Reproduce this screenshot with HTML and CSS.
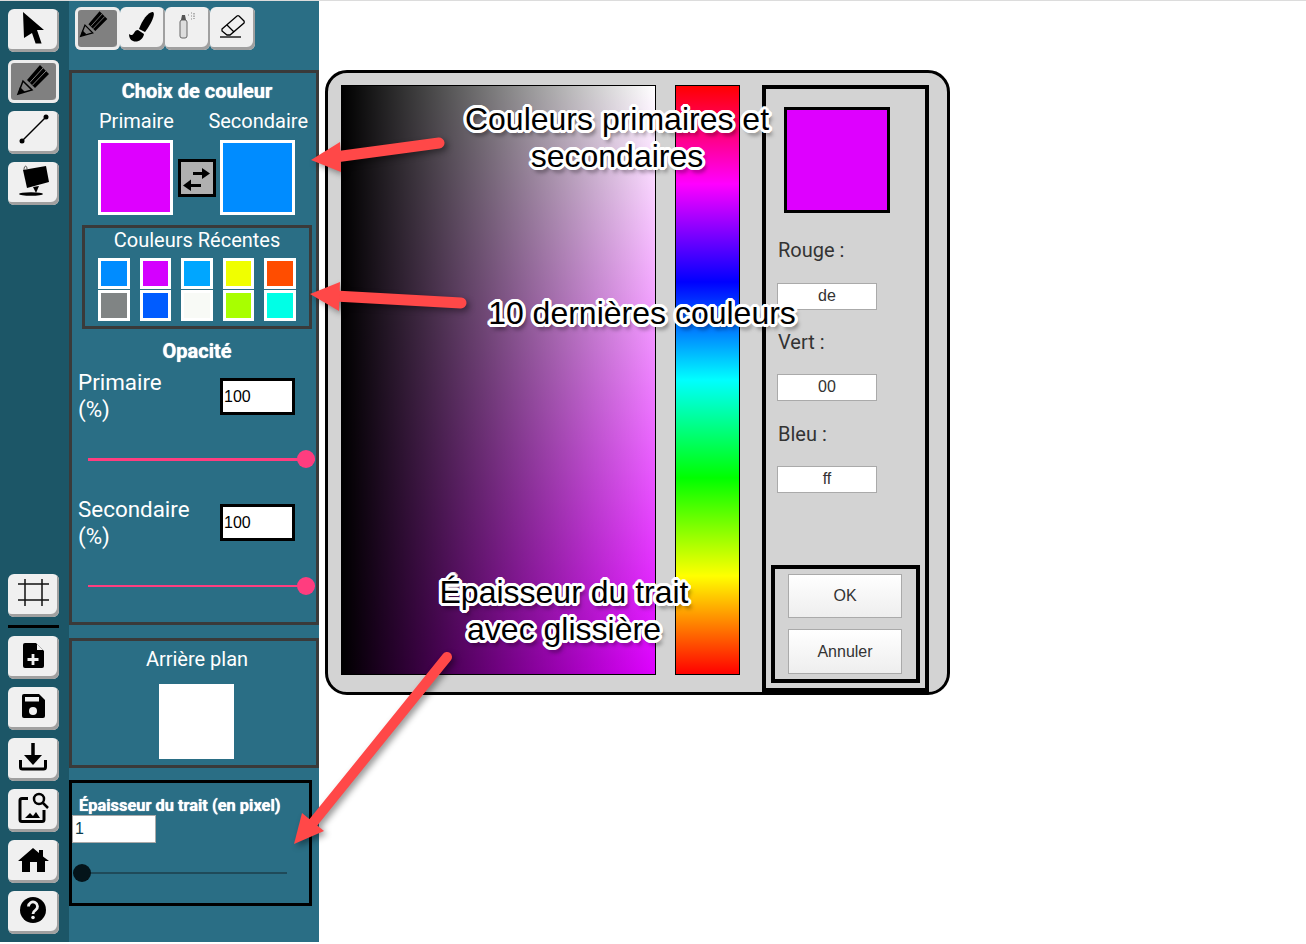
FILE: index.html
```html
<!DOCTYPE html>
<html lang="fr">
<head>
    <meta charset="UTF-8">
    <title>Choix de couleur</title>
    <link rel="stylesheet" href="styles.css">
</head>
<body>
    <svg class="defs" width="0" height="0">
        <symbol id="pencil" viewBox="0 0 51 43">
            <path d="M10 34 L15 21 L24 30 Z" fill="none" stroke="#000" stroke-width="1.500"/>
            <path d="M10 34 L12 27 L17 32 Z"/>
            <path d="M19 20 L32 5 L41 14 L27 28 Z"/>
            <path d="M21.700 22.700 L35 8 M24.300 25.300 L38 11" stroke="#808080" stroke-width="1"/>
        </symbol>
    </svg>

    <div class="app">
        <nav class="toolbar">
            <div class="toolgroup">
                <button class="tool">
                    <svg viewBox="0 0 51 43"><path d="M15 3 L36 21 L29 21 L33.600 34.600 L27.600 34.600 L24 24 L16 29 Z"/></svg>
                </button>
                <button class="tool active">
                    <svg viewBox="0 0 51 43"><use href="#pencil"/></svg>
                </button>
                <button class="tool">
                    <svg viewBox="0 0 51 43"><circle cx="14" cy="30" r="2.500"/><circle cx="38" cy="6" r="2.500"/><path d="M14 30 L38 6" stroke="#000" stroke-width="1.500"/></svg>
                </button>
                <button class="tool">
                    <svg viewBox="0 0 51 43">
                        <path d="M15 8 L38 4 L41 20 L19 26 Z"/>
                        <path d="M16 8 C16 3 19 3 19 7" fill="none" stroke="#555"/>
                        <path d="M25 25 L28 31 L31 24 Z"/>
                        <ellipse cx="23" cy="32" rx="12" ry="1.800"/>
                    </svg>
                </button>
            </div>
            <div class="toolgroup bottom">
                <button class="tool">
                    <svg viewBox="0 0 51 43"><path d="M17 5 V32 M34 5 V32 M10 10 H41 M10 26 H41" stroke="#111" stroke-width="1.500"/></svg>
                </button>
                <div class="separator"></div>
                <button class="tool">
                    <svg viewBox="0 0 51 43">
                        <path d="M17 7 H28 L36 15 V30 A2 2 0 0 1 34 32 H17 A2 2 0 0 1 15 30 V9 A2 2 0 0 1 17 7 Z"/>
                        <path d="M29 8 L35 14 H29 Z" fill="#f0f0f0"/>
                        <path d="M25 18 V29 M19.500 23.500 H30.500" stroke="#f0f0f0" stroke-width="2.800"/>
                    </svg>
                </button>
                <button class="tool">
                    <svg viewBox="0 0 51 43">
                        <path d="M16 7 H31 L37 13 V29 A2 2 0 0 1 35 31 H16 A2 2 0 0 1 14 29 V9 A2 2 0 0 1 16 7 Z"/>
                        <rect x="17" y="10" width="14" height="4.500" fill="#f0f0f0"/>
                        <circle cx="25" cy="24" r="4" fill="#f0f0f0"/>
                    </svg>
                </button>
                <button class="tool">
                    <svg viewBox="0 0 51 43">
                        <path d="M25 5 V20" stroke="#000" stroke-width="3.500"/>
                        <path d="M16 17 H34 L25 27 Z"/>
                        <path d="M12.500 22 V29 A2 2 0 0 0 14.500 31 H35.500 A2 2 0 0 0 37.500 29 V22" fill="none" stroke="#000" stroke-width="3"/>
                    </svg>
                </button>
                <button class="tool">
                    <svg viewBox="0 0 51 43">
                        <path d="M20 9.500 H14 A2 2 0 0 0 12 11.500 V30.500 A2 2 0 0 0 14 32.500 H34 A2 2 0 0 0 36 30.500 V21" fill="none" stroke="#000" stroke-width="3"/>
                        <path d="M17 29 L22 24 L25 27 L28 23 L32 29 Z"/>
                        <circle cx="31" cy="10" r="5" fill="none" stroke="#000" stroke-width="2.500"/>
                        <path d="M35 14 L40 19" stroke="#000" stroke-width="2.500"/>
                    </svg>
                </button>
                <button class="tool">
                    <svg viewBox="0 0 51 43"><path d="M25 8 L31 13 V10 H35 V16.500 L41 21 H37 V32 H29 V22 H22 V32 H14 V21 H10 Z"/></svg>
                </button>
                <button class="tool">
                    <svg viewBox="0 0 51 43">
                        <circle cx="25" cy="19" r="13"/>
                        <path d="M20.500 15.500 A4.500 4.500 0 1 1 27.500 19.200 C26 20.200 25 21 25 23" fill="none" stroke="#f0f0f0" stroke-width="2.800"/>
                        <circle cx="25" cy="26.500" r="1.800" fill="#f0f0f0"/>
                    </svg>
                </button>
            </div>
        </nav>

        <aside class="panel">
            <div class="subtools">
                <button class="tool small active">
                    <svg viewBox="0 0 45 43"><use href="#pencil" x="-3" y="0" width="44" height="37"/></svg>
                </button>
                <button class="tool small">
                    <svg viewBox="0 0 45 43">
                        <path d="M33 5 C36 7 31 17 25 25 L19 22 C22 13 29 4 33 5 Z"/>
                        <path d="M18 23 L24 27 C23 33 17 36 13 34 C10 33 9 30 9 27 C11 29 13 28 14 26 C15 24 16 23 18 23 Z"/>
                    </svg>
                </button>
                <button class="tool small">
                    <svg viewBox="0 0 45 43">
                        <rect x="15" y="13" width="7" height="18" rx="2" fill="#ddd" stroke="#666"/>
                        <path d="M16 13 L17 8 H20 L21 13 Z" fill="#555"/>
                        <path d="M23 8 H24 M26 6 H27 M26 9 H27 M26 12 H27 M29 6 V12" stroke="#888" stroke-width="1.200" stroke-dasharray="1.500 1"/>
                    </svg>
                </button>
                <button class="tool small">
                    <svg viewBox="0 0 45 43">
                        <path d="M12 22 L27 9 A2 2 0 0 1 29 9 L34 14 A2 2 0 0 1 34 16 L20 28 L17 28 L12 24 Z" fill="none" stroke="#000" stroke-width="1.300"/>
                        <path d="M17 18 L24 25" stroke="#000" stroke-width="1.300"/>
                        <path d="M10 30 H31" stroke="#000" stroke-width="1.300"/>
                    </svg>
                </button>
            </div>

            <section class="box colors">
                <h2 class="title">Choix de couleur</h2>
                <div class="pick-labels">
                    <span>Primaire</span>
                    <span>Secondaire</span>
                </div>
                <div class="pick-row">
                    <div class="swatch big primary"></div>
                    <button class="swap">
                        <svg viewBox="0 0 32 32">
                            <path d="M12 11.500 H22" stroke="#000" stroke-width="3"/>
                            <path d="M21 6 L29 11.500 L21 17 Z"/>
                            <path d="M20 23.500 H9" stroke="#000" stroke-width="3"/>
                            <path d="M10 17.500 L2 23.500 L10 29 Z"/>
                        </svg>
                    </button>
                    <div class="swatch big secondary"></div>
                </div>

                <div class="recent">
                    <div class="recent-title">Couleurs Récentes</div>
                    <div class="recent-grid">
                        <div class="swatch" style="background:#008cff"></div>
                        <div class="swatch" style="background:#d400ff"></div>
                        <div class="swatch" style="background:#00a6ff"></div>
                        <div class="swatch" style="background:#f0ff00"></div>
                        <div class="swatch" style="background:#ff4d00"></div>
                        <div class="swatch" style="background:#808484"></div>
                        <div class="swatch" style="background:#005cff"></div>
                        <div class="swatch" style="background:#f8faf6"></div>
                        <div class="swatch" style="background:#a8ff00"></div>
                        <div class="swatch" style="background:#00ffe6"></div>
                    </div>
                </div>

                <h2 class="title opacity-title">Opacité</h2>
                <div class="opacity-row">
                    <label class="opacity-label">Primaire (%)</label>
                    <input class="opacity-input" type="text" value="100">
                </div>
                <input class="range pink thick" type="range" min="0" max="100" value="100">
                <div class="opacity-row">
                    <label class="opacity-label">Secondaire (%)</label>
                    <input class="opacity-input" type="text" value="100">
                </div>
                <input class="range pink" type="range" min="0" max="100" value="100">
            </section>

            <section class="box background">
                <div class="bg-title">Arrière plan</div>
                <div class="bg-swatch"></div>
            </section>

            <section class="stroke">
                <div class="stroke-title">Épaisseur du trait (en pixel)</div>
                <input class="stroke-input" type="text" value="1">
                <input class="range dark" type="range" min="1" max="100" value="1">
            </section>
        </aside>

        <main class="workspace">
            <div class="dialog">
                <div class="sv-picker"></div>
                <div class="hue-bar"></div>
                <div class="dialog-side">
                    <div class="preview"></div>
                    <div class="field">
                        <label>Rouge :</label>
                        <input type="text" value="de">
                    </div>
                    <div class="field">
                        <label>Vert :</label>
                        <input type="text" value="00">
                    </div>
                    <div class="field">
                        <label>Bleu :</label>
                        <input type="text" value="ff">
                    </div>
                    <div class="dialog-buttons">
                        <button class="dlg-btn">OK</button>
                        <button class="dlg-btn">Annuler</button>
                    </div>
                </div>
            </div>
        </main>
    </div>

    <!-- annotations par dessus la capture -->
    <svg class="arrows" viewBox="0 0 1306 944">
        <g fill="#ff4848" stroke="#ff4848" stroke-linecap="round">
            <path d="M439 143 L335 157" stroke-width="11" fill="none"/>
            <path d="M311 160 L340 142 L341 172 Z" stroke="none"/>
            <path d="M461 303 L335 296" stroke-width="11" fill="none"/>
            <path d="M310 294 L340 282 L339 311 Z" stroke="none"/>
            <path d="M447 657 L312 824" stroke-width="10" fill="none"/>
            <path d="M294 844 L302 813 L324 831 Z" stroke="none"/>
        </g>
    </svg>
    <div class="note note-1">Couleurs primaires et<br>secondaires</div>
    <div class="note note-2">10 dernières couleurs</div>
    <div class="note note-3">Épaisseur du trait<br>avec glissière</div>
</body>
</html>
```

FILE: styles.css
```css
*{
    box-sizing: border-box;
}
body{
    margin: 0px;
    height: 944px;
    background-color: white;
    font-family: Roboto, Arial, sans-serif;
    border-top: 1px solid #dcdcdc;
    overflow: hidden;
    position: relative;
}
.defs{
    position: absolute;
}
.app{
    display: flex;
    height: 941px;
}
button{
    padding: 0;
    font-family: inherit;
}
svg{
    display: block;
}

/* barre de gauche */
.toolbar{
    width: 69px;
    background-color: #1c5667;
    padding: 8px 10px 8px 8px;
    display: flex;
    flex-direction: column;
    justify-content: space-between;
}
.toolgroup{
    display: flex;
    flex-direction: column;
    gap: 8px;
}
.tool{
    width: 51px;
    height: 43px;
    border: 0;
    border-radius: 6px;
    background-color: #f0f0f0;
    box-shadow: inset -2px -3px 0 #a0a0a0;
}
.tool svg{
    width: 100%;
    height: 100%;
}
.tool.active{
    background-color: #808080;
    box-shadow: inset 0 0 0 3px #ededed, inset -2px -3px 0 #a8a8a8;
}
.tool.small{
    width: 45px;
}
.separator{
    height: 3px;
    background-color: black;
}

/* panneau */
.panel{
    width: 250px;
    background-color: #2a6e85;
    color: white;
}
.subtools{
    display: flex;
    height: 69px;
    padding: 6px 0 0 6px;
}
.box{
    border: 3px solid #3a3a3a;
}
.title{
    margin: 0;
    padding-left: 6px;
    font-size: 20px;
    font-weight: 700;
    text-align: center;
    text-shadow: 0 0 1px white;
    line-height: 24px;
}
.colors{
    height: 555px;
    padding-top: 6px;
}
.pick-labels{
    display: flex;
    justify-content: space-between;
    font-size: 20px;
    line-height: 24px;
    margin-top: 6px;
    padding: 0 8px 0 27px;
}
.pick-row{
    display: flex;
    align-items: center;
    gap: 5px;
    padding-left: 26px;
    margin-top: 7px;
}
.swatch{
    border: 3px solid white;
}
.swatch.big{
    width: 75px;
    height: 75px;
}
.primary{
    background-color: #de00ff;
}
.secondary{
    background-color: #008cff;
}
.swap{
    width: 38px;
    height: 38px;
    border: 3px solid black;
    background-color: #b0b0b0;
    margin-right: -1px;
}
.recent{
    width: 230px;
    height: 104px;
    margin: 10px 0 0 10px;
    border: 3px solid #3a3a3a;
}
.recent-title{
    font-size: 20px;
    line-height: 24px;
    text-align: center;
}
.recent-grid{
    display: grid;
    grid-template-columns: repeat(5, 31.600px);
    grid-auto-rows: 30.500px;
    column-gap: 10px;
    row-gap: 1.500px;
    padding-left: 13px;
    margin-top: 6px;
}
.opacity-title{
    margin-top: 10px;
}
.opacity-row{
    display: flex;
    justify-content: space-between;
    height: 54px;
    margin-top: 6px;
    padding: 0 21px 0 6px;
}
.range + .opacity-row{
    margin-top: 28px;
}
.opacity-label{
    width: 118px;
    font-size: 22.400px;
    line-height: 27px;
}
.opacity-input{
    width: 75px;
    height: 37px;
    margin-top: 9px;
    border: 3px solid black;
    padding: 0 0 0 1px;
    background-color: white;
    font-family: "Liberation Sans", Arial, sans-serif;
    font-size: 16px;
    color: black;
    outline: 0;
}
.range + .opacity-row .opacity-input{
    margin-top: 8px;
}

/* glissieres */
.range{
    display: block;
    -webkit-appearance: none;
    appearance: none;
    background: transparent;
    margin: 0;
    height: 18px;
}
.range::-webkit-slider-runnable-track{
    height: 2px;
}
.range::-webkit-slider-thumb{
    -webkit-appearance: none;
    width: 18px;
    height: 18px;
    border-radius: 50%;
    margin-top: -8px;
}
.range.pink{
    width: 227px;
    margin: 27px 0 0 16px;
}
.range.pink::-webkit-slider-runnable-track{
    background-color: #ff3d7f;
}
.range.pink::-webkit-slider-thumb{
    background-color: #ff3d7f;
}
.range.thick::-webkit-slider-runnable-track{
    height: 3px;
}
.range.thick::-webkit-slider-thumb{
    margin-top: -7.500px;
}
.range.dark{
    width: 214px;
    margin: 21px 0 0 1px;
}
.range.dark::-webkit-slider-runnable-track{
    background-color: #1f4a59;
}
.range.dark::-webkit-slider-thumb{
    background-color: #04141a;
}

.background{
    height: 130px;
    margin-top: 13px;
    padding-top: 6px;
}
.bg-title{
    padding-left: 6px;
    font-size: 20px;
    line-height: 24px;
    text-align: center;
}
.bg-swatch{
    width: 75px;
    height: 75px;
    margin: 13px 0 0 87px;
    background-color: white;
}
.stroke{
    width: 243px;
    height: 126px;
    margin-top: 12px;
    border: 3px solid black;
    padding-top: 13px;
}
.stroke-title{
    font-size: 16.400px;
    font-weight: 700;
    line-height: 19px;
    padding-left: 7px;
    white-space: nowrap;
    text-shadow: 0 0 1px white;
}
.stroke-input{
    display: block;
    width: 84px;
    height: 28px;
    border: 1px solid #aaa;
    padding: 0 2px;
    background-color: white;
    font-family: "Liberation Sans", Arial, sans-serif;
    font-size: 16px;
    color: #0a3a4a;
    outline: 0;
}

/* selecteur de couleur */
.workspace{
    flex: 1;
    padding: 69px 0 0 6px;
}
.dialog{
    width: 625px;
    height: 625px;
    display: flex;
    padding: 12px 18px 0 13px;
    border: 3px solid black;
    border-radius: 22px;
    background-color: #d3d3d3;
}
.sv-picker{
    width: 315px;
    height: 590px;
    border: 1px solid black;
    background: linear-gradient(to right, #000, rgba(0, 0, 0, 0)), linear-gradient(to bottom, #fff, #de00ff);
}
.hue-bar{
    width: 65px;
    height: 590px;
    margin-left: 19px;
    border: 1px solid black;
    background: linear-gradient(to bottom, #f00 0%, #f0f 16.660%, #00f 33.330%, #0ff 50%, #0f0 66.660%, #ff0 83.330%, #f00 100%);
}
.dialog-side{
    width: 167px;
    margin-left: 22px;
    border: 4px solid black;
    display: flex;
    flex-direction: column;
    color: #333;
}
.preview{
    width: 106px;
    height: 106px;
    margin: 18px 0 0 18px;
    border: 3px solid black;
    background-color: #de00ff;
}
.field{
    margin: 20px 0 0 11px;
}
.preview + .field{
    margin-top: 25px;
}
.field + .field + .field{
    margin-top: 21px;
}
.field label{
    display: block;
    padding-left: 1px;
    font-size: 20px;
    line-height: 24px;
}
.field input{
    display: block;
    width: 100px;
    height: 27px;
    margin-top: 20px;
    border: 1px solid #aaa;
    padding: 0 0 1px 0;
    background-color: white;
    font-family: "Liberation Sans", Arial, sans-serif;
    font-size: 16px;
    color: #333;
    text-align: center;
    outline: 0;
}
.preview + .field input{
    margin-top: 21px;
}
.dialog-buttons{
    width: 149px;
    height: 118px;
    margin: auto 0 5px 5px;
    border: 4px solid black;
    padding: 5px 0 0 13px;
    display: flex;
    flex-direction: column;
    gap: 11px;
}
.dlg-btn{
    width: 114px;
    height: 44px;
    border: 1px solid #aaa;
    background: linear-gradient(to bottom, white, #eeeeee);
    font-family: "Liberation Sans", Arial, sans-serif;
    font-size: 16px;
    color: #333;
}
.dlg-btn + .dlg-btn{
    height: 45px;
}

/* fleches et textes de la capture */
.arrows{
    position: absolute;
    left: 0;
    top: -1px;
    width: 1306px;
    height: 944px;
    pointer-events: none;
    filter: drop-shadow(3px 3px 3px rgba(0, 0, 0, 0.4));
}
.note{
    position: absolute;
    font-family: "Liberation Sans", Arial, sans-serif;
    font-size: 32px;
    line-height: 37px;
    text-align: center;
    white-space: nowrap;
    color: black;
    transform: translateX(-50%);
    text-shadow:
        3px 0 0 white, -3px 0 0 white, 0 3px 0 white, 0 -3px 0 white,
        2px 2px 0 white, -2px 2px 0 white, 2px -2px 0 white, -2px -2px 0 white,
        3px 1px 0 white, -3px 1px 0 white, 3px -1px 0 white, -3px -1px 0 white,
        1px 3px 0 white, -1px 3px 0 white, 1px -3px 0 white, -1px -3px 0 white,
        3px 5px 4px rgba(0, 0, 0, 0.6);
}
.note-1{
    left: 617px;
    top: 100px;
}
.note-2{
    left: 642px;
    top: 294px;
}
.note-3{
    left: 564px;
    top: 573px;
}
```
